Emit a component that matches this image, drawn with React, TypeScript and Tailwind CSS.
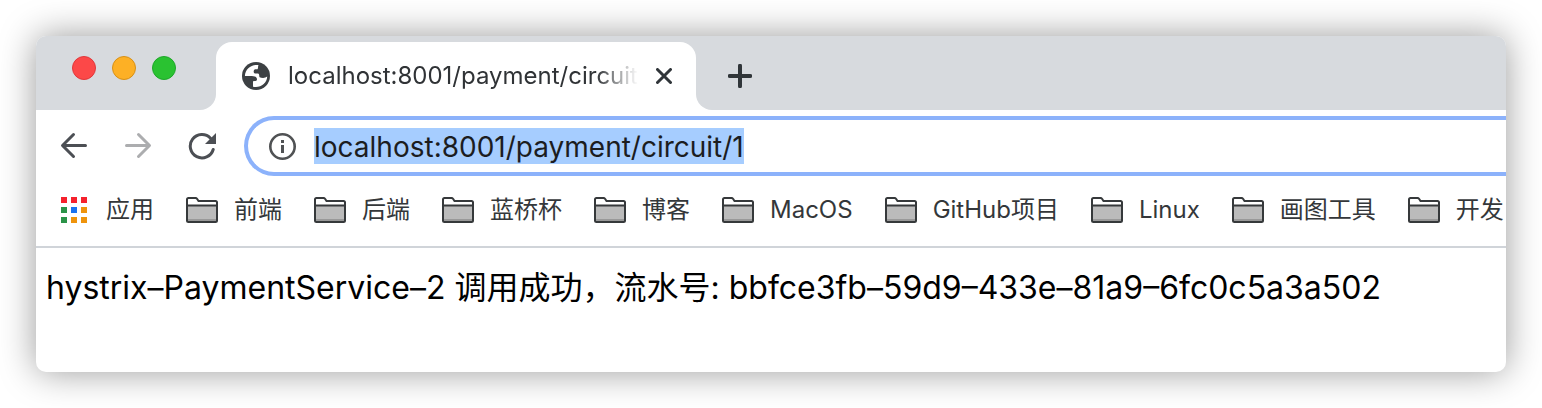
import React from "react";

const bookmarks = ["前端", "后端", "蓝桥杯", "博客", "MacOS", "GitHub项目", "Linux", "画图工具", "开发"];

function GlobeIcon() {
  return (
    <svg className="size-7 shrink-0" viewBox="0 0 28 28" aria-hidden="true">
      <circle cx="14" cy="14" r="14" fill="#3c4043" />
      <path
        fill="#fff"
        d="M16.500 3.100C9.500 1.800 3.200 6.800 2.900 14H8.500C11 14 14.800 14.200 15 17.200C15 18.600 14 19.200 11 19.200V24.700C18 26.300 25 21.800 25.200 14.600C23.500 16.300 19.500 16.200 17.600 15.200C16.900 14 17.800 12.400 16.200 11.600H13C11.200 10.800 11.200 7.900 13.200 7.200H15.500C16.500 6 15.700 4.500 16.500 3.100Z"
      />
    </svg>
  );
}

function FolderIcon() {
  return (
    <svg className="h-[26px] w-8 shrink-0" viewBox="0 0 32 26" aria-hidden="true">
      <path d="M1 8.500H31V23.500Q31 25 29.500 25H2.500Q1 25 1 23.500Z" fill="#bbb" />
      <path d="M2 22H30V24H2Z" fill="#999" />
      <path
        d="M1 8.500V2.500Q1 1 2.500 1H9.500Q10.500 1 11.200 2L12.500 4H29.500Q31 4 31 5.500V23.500Q31 25 29.500 25H2.500Q1 25 1 23.500V8.500H31"
        fill="none"
        stroke="#36393b"
        strokeWidth="2"
      />
    </svg>
  );
}

function AppsIcon() {
  return (
    <svg className="size-[26px] shrink-0" viewBox="0 0 26 26" aria-hidden="true">
      <path d="M0 0h6v6H0zM10 0h6v6h-6zM20 0h6v6h-6z" fill="#f5222d" />
      <path d="M0 10h6v6H0zM0 20h6v6H0z" fill="#2b9348" />
      <path d="M10 10h6v6h-6z" fill="#1a73f0" />
      <path d="M20 10h6v6h-6zM10 20h6v6h-6zM20 20h6v6h-6z" fill="#ef940c" />
    </svg>
  );
}

export default function App() {
  return (
    <div className="min-h-screen bg-white p-9 font-['Inter','Noto_Sans_CJK_SC',sans-serif]">
      <div className="overflow-hidden rounded-[10px] bg-white shadow-[0_0_36px_rgba(0,0,0,0.4)]">
        <header className="flex h-[74px] items-end bg-[#d7dade]">
          <div className="flex gap-4 self-start pt-5 pl-9">
            <button aria-label="Close window" className="size-6 rounded-full border border-[#e0383b] bg-[#fc4848]" />
            <button aria-label="Minimize window" className="size-6 rounded-full border border-[#d79017] bg-[#fdb025]" />
            <button aria-label="Zoom window" className="size-6 rounded-full border border-[#1ea82a] bg-[#2ac231]" />
          </div>
          <div className="h-4 w-10 self-end overflow-hidden bg-white">
            <div className="size-full rounded-br-2xl bg-[#d7dade]" />
          </div>
          <div className="flex h-[68px] w-[480px] items-center rounded-t-2xl bg-white pl-[26px]">
            <GlobeIcon />
            <span className="ml-[18px] w-[350px] overflow-hidden text-2xl whitespace-nowrap text-[#303336] [mask-image:linear-gradient(to_right,black_88%,transparent)]">
              localhost:8001/payment/circuit/1
            </span>
            <button aria-label="Close tab" className="ml-[18px]">
              <svg className="size-4" viewBox="0 0 16 16" aria-hidden="true">
                <path d="M1.500 1.500L14.500 14.500M14.500 1.500L1.500 14.500" stroke="#303539" strokeWidth="3" strokeLinecap="round" />
              </svg>
            </button>
          </div>
          <div className="h-4 w-8 self-end overflow-hidden bg-white">
            <div className="size-full rounded-bl-2xl bg-[#d7dade]" />
          </div>
          <button aria-label="New tab" className="flex h-[68px] items-center">
            <svg className="size-6" viewBox="0 0 24 24" aria-hidden="true">
              <path d="M12 1.700V22.300M1.700 12H22.300" stroke="#303539" strokeWidth="4" strokeLinecap="round" />
            </svg>
          </button>
        </header>

        <div className="flex items-center pt-1.5 pl-6">
          <button aria-label="Back">
            <svg className="size-7" viewBox="0 0 28 28" fill="none" aria-hidden="true">
              <path d="M25.500 13.500H3M13.500 2.500L2.500 13.500L13.500 24.500" stroke="#4c4f54" strokeWidth="3" strokeLinecap="round" strokeLinejoin="round" />
            </svg>
          </button>
          <button aria-label="Forward" className="ml-9">
            <svg className="size-7" viewBox="0 0 28 28" fill="none" aria-hidden="true">
              <path d="M2.500 13.500H25M14.500 2.500L25.500 13.500L14.500 24.500" stroke="#acadaf" strokeWidth="3" strokeLinecap="round" strokeLinejoin="round" />
            </svg>
          </button>
          <button aria-label="Reload" className="ml-9">
            <svg className="size-7" viewBox="0 0 28 28" fill="none" aria-hidden="true">
              <path d="M25.200 17.500A11.700 11.700 0 1 1 22.500 6.200" stroke="#4c4f54" strokeWidth="3" strokeLinecap="round" />
              <path d="M28 1V12H17Z" fill="#4c4f54" />
            </svg>
          </button>
          <div className="ml-7 flex h-[60px] flex-1 items-center rounded-l-full border-4 border-r-0 border-[#8cb2fb] pl-5">
            <svg className="size-7 shrink-0" viewBox="0 0 28 28" fill="none" aria-hidden="true">
              <circle cx="14.500" cy="14.500" r="12.200" stroke="#505254" strokeWidth="2.600" />
              <path d="M13 8h3v3h-3zM13 13h3v8h-3z" fill="#505254" />
            </svg>
            <input
              aria-label="Address"
              type="text"
              defaultValue="localhost:8001/payment/circuit/1"
              className="ml-[18px] field-sizing-content h-9 bg-[#a6cdff] pt-0.5 text-[28px] leading-8 text-[#1c1d1f] outline-none"
            />
          </div>
        </div>

        <nav aria-label="Bookmarks" className="flex h-[72px] items-center gap-8 overflow-hidden border-b-2 border-[#d0d4d9] pb-0.5 pl-[25px] text-2xl whitespace-nowrap text-[#34373a]">
          <a href="#apps" className="flex shrink-0 items-center gap-[19px]">
            <AppsIcon />
            应用
          </a>
          {bookmarks.map((name) => (
            <a key={name} href="#bookmark" className="flex shrink-0 items-center gap-4">
              <FolderIcon />
              {name}
            </a>
          ))}
        </nav>

        <main className="px-2.5 pt-4 pb-15 text-[32px] leading-12 text-black">
          hystrix–PaymentService–2 调用成功，流水号: bbfce3fb–59d9–433e–81a9–6fc0c5a3a502
        </main>
      </div>
    </div>
  );
}
